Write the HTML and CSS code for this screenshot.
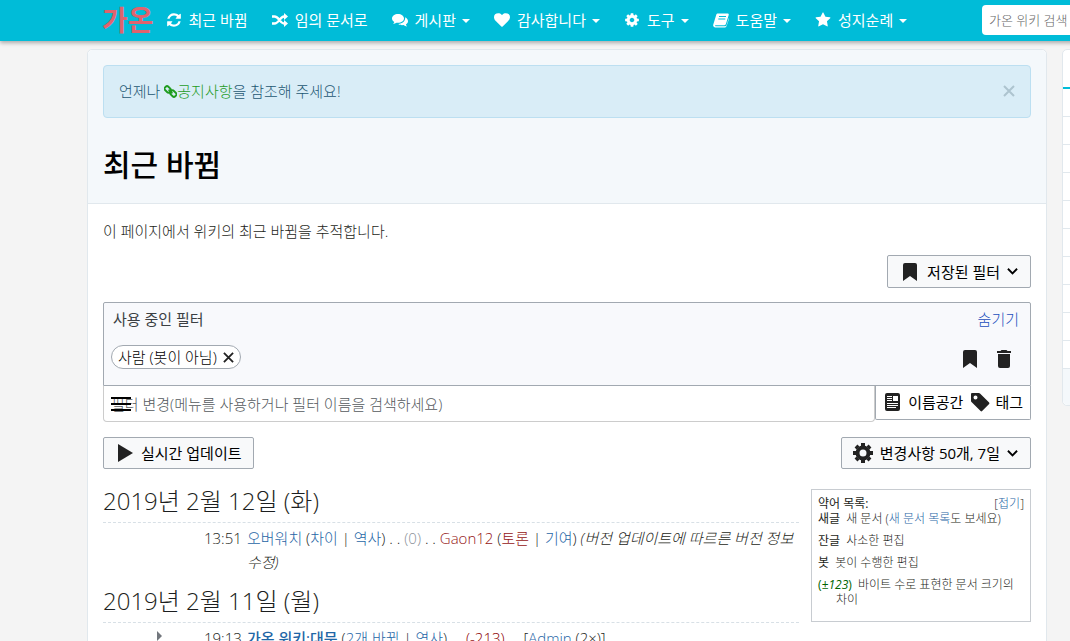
FILE: index.html
```html
<!DOCTYPE html>
<html lang="ko">
  <head>
    <meta charset="UTF-8" />
    <meta name="viewport" content="width=device-width, initial-scale=1.0" />
    <title>최근 바뀜 - 가온 위키</title>
    <link rel="stylesheet" href="styles.css">
  </head>
  <body>
    <nav class="navbar">
      <a class="brand" href="#">가온</a>
      <a class="nav-item" href="#">
        <svg class="nav-icon" viewBox="0 0 1792 1792"><path d="M1639 1056q0 5-1 7-64 268-268 434.500t-478 166.500q-146 0-282.500-55t-243.500-157l-129 129q-19 19-45 19t-45-19-19-45v-448q0-26 19-45t45-19h448q26 0 45 19t19 45-19 45l-137 137q71 66 161 102t187 36q134 0 250-65t186-179q11-17 53-117 8-23 30-23h192q13 0 22.500 9.500t9.500 22.500zm25-800v448q0 26-19 45t-45 19h-448q-26 0-45-19t-19-45 19-45l138-138q-148-137-349-137-134 0-250 65t-186 179q-11 17-53 117-8 23-30 23h-199q-13 0-22.500-9.500t-9.500-22.500v-7q65-268 270-434.500t480-166.500q146 0 284 55.500t245 156.500l130-129q19-19 45-19t45 19 19 45z"/></svg>
        <span>최근 바뀜</span>
      </a>
      <a class="nav-item" href="#">
        <svg class="nav-icon" viewBox="0 0 16 16"><path d="M0 4.500h2.500c4.500 0 5.500 7 9.500 7h1M0 11.500h2.500c4.500 0 5.500-7 9.500-7h1" fill="none" stroke="currentColor" stroke-width="2.400"/><path d="M12 1l4 3.500L12 8zM12 8l4 3.500-4 3.500z"/></svg>
        <span>임의 문서로</span>
      </a>
      <a class="nav-item" href="#">
        <svg class="nav-icon" viewBox="0 0 16 16"><path d="M6 2C2.700 2 0 4 0 6.500 0 8 .9 9.200 2.300 10c-.2.800-.7 1.400-1.200 2 1.300-.1 2.500-.6 3.400-1.300.5.100 1 .1 1.500.1 3.300 0 6-1.900 6-4.300S9.300 2 6 2z"/><path d="M13.200 5.300c.4 3.800-2.800 6.500-7 6.700 1.300 1 3.300 1.400 5.300 1.100 1 .8 2.200 1.300 3.600 1.400-.6-.6-1-1.200-1.200-2 1.300-.8 2.100-1.900 2.100-3.200 0-1.700-1.100-3.200-2.800-4z"/></svg>
        <span>게시판</span><span class="caret"></span>
      </a>
      <a class="nav-item" href="#">
        <svg class="nav-icon" viewBox="0 0 1792 1792"><path d="M896 1664q-26 0-44-18l-624-602q-10-8-27.500-26t-55.500-65.500-68-97.500-53.500-121-23.500-138q0-220 127-344t351-124q62 0 126.500 21.500t120 58 95.500 68.500 76 68q36-36 76-68t95.500-68.500 120-58 126.500-21.500q224 0 351 124t127 344q0 221-229 450l-623 600q-18 18-44 18z"/></svg>
        <span>감사합니다</span><span class="caret"></span>
      </a>
      <a class="nav-item" href="#">
        <svg class="nav-icon" viewBox="0 0 1792 1792"><path d="M1152 896q0-106-75-181t-181-75-181 75-75 181 75 181 181 75 181-75 75-181zm512-109v222q0 12-8 23t-20 13l-185 28q-19 54-39 91 35 50 107 138 10 12 10 25t-9 23q-27 37-99 108t-94 71q-12 0-26-9l-138-108q-44 23-91 38-16 136-29 186-7 28-36 28h-222q-14 0-24.500-8.500t-11.500-21.500l-28-184q-49-16-90-37l-141 107q-10 9-25 9-14 0-25-11-126-114-165-168-7-10-7-23 0-12 8-23 15-21 51-66.500t54-70.500q-27-50-41-99l-183-27q-13-2-21-12.500t-8-23.500v-222q0-12 8-23t19-13l186-28q14-46 39-92-40-57-107-138-10-12-10-24 0-10 9-23 26-36 98.500-107.500t94.500-71.500q13 0 26 10l138 107q44-23 91-38 16-136 29-186 7-28 36-28h222q14 0 24.500 8.500t11.500 21.500l28 184q49 16 90 37l142-107q9-9 24-9 13 0 25 10 129 119 165 170 7 8 7 22 0 12-8 23-15 21-51 66.500t-54 70.500q26 50 41 98l183 28q13 2 21 12.500t8 23.500z"/></svg>
        <span>도구</span><span class="caret"></span>
      </a>
      <a class="nav-item" href="#">
        <svg class="nav-icon" viewBox="0 0 16 16"><path d="M5 1.500h9.500c1 0 1.500.7 1.200 1.600l-2.800 9c-.2.700-.8 1.100-1.500 1.100H2.600c-.5 0-.8.500-.4.900.2.200.5.200.8.200h9.200c.6 0 1.100-.4 1.300-1L15.900 6c.2.300.2.700.1 1l-2.400 7c-.3.900-1.100 1.500-2 1.500H2.400C.9 15.500-.2 14 .2 12.700l3-9.800C3.500 2 4.100 1.500 5 1.500z"/><path d="M6 4.500h7M5.300 7h7" stroke="#00bcd8" stroke-width="1"/></svg>
        <span>도움말</span><span class="caret"></span>
      </a>
      <a class="nav-item" href="#">
        <svg class="nav-icon" viewBox="0 0 1792 1792"><path d="M1728 647q0 22-26 48l-363 354 86 500q1 7 1 20 0 21-10.500 35.500t-30.500 14.500q-19 0-40-12l-449-236-449 236q-22 12-40 12-21 0-31.500-14.500t-10.500-35.500q0-6 2-20l86-500-364-354q-25-27-25-48 0-37 56-46l502-73 225-455q19-41 49-41t49 41l225 455 502 73q56 9 56 46z"/></svg>
        <span>성지순례</span><span class="caret"></span>
      </a>
      <input class="search" type="text" placeholder="가온 위키 검색" aria-label="가온 위키 검색" />
    </nav>

    <div class="layout">
      <main class="content">
        <header class="content-header">
          <div class="alert">
            <div>언제나 <a class="notice-link" href="#"><svg class="link-icon" viewBox="0 0 14 14"><g fill="none" stroke="currentColor" stroke-width="2"><rect x="1" y="2" width="7" height="5" rx="2" transform="rotate(45 4 4)"/><rect x="6" y="7" width="7" height="5" rx="2" transform="rotate(45 10 10)"/><path d="M5 5l4 4"/></g></svg>공지사항</a>을 참조해 주세요!</div>
            <button class="close" aria-label="닫기">
              <svg viewBox="0 0 12 12"><path d="M1 1l10 10M11 1L1 11"/></svg>
            </button>
          </div>
          <h1>최근 바뀜</h1>
        </header>

        <div class="content-body">
          <p class="intro">이 페이지에서 위키의 최근 바뀜을 추적합니다.</p>

          <div class="saved-row">
            <button class="btn saved-btn">
              <svg class="icon" viewBox="0 0 20 20"><path d="M5 1a2 2 0 0 0-2 2v16l7-5 7 5V3a2 2 0 0 0-2-2z"/></svg>
              <span>저장된 필터</span>
              <svg class="chevron" viewBox="0 0 12 12"><path d="M1 3l5 5 5-5"/></svg>
            </button>
          </div>

          <section class="filters">
            <div class="active-filters">
              <div class="filter-row">
                <span class="filter-title">사용 중인 필터</span>
                <a class="hide-link" href="#">숨기기</a>
              </div>
              <div class="filter-row">
                <span class="chip">사람 (봇이 아님)
                  <button class="chip-close" aria-label="필터 제거"><svg viewBox="0 0 12 12"><path d="M1 1l10 10M11 1L1 11"/></svg></button>
                </span>
                <span class="filter-actions">
                  <button class="icon-btn" aria-label="필터 저장"><svg class="icon" viewBox="0 0 20 20"><path d="M5 1a2 2 0 0 0-2 2v16l7-5 7 5V3a2 2 0 0 0-2-2z"/></svg></button>
                  <button class="icon-btn" aria-label="필터 지우기"><svg class="icon" viewBox="0 0 20 20"><path d="M17 2h-3.500l-1-1h-5l-1 1H3v2h14zM4 17a2 2 0 0 0 2 2h8a2 2 0 0 0 2-2V5H4z"/></svg></button>
                </span>
              </div>
            </div>
            <div class="filter-search">
              <div class="filter-field">
                <input class="filter-input" type="text" placeholder="필터 변경(메뉴를 사용하거나 필터 이름을 검색하세요)" aria-label="필터 변경" />
                <svg class="menu-icon" viewBox="0 0 20 20"><path d="M0 4h20M0 10h20M0 16h20"/></svg>
              </div>
              <div class="filter-views">
                <button class="view-btn">
                  <svg class="icon" viewBox="0 0 20 20"><path fill-rule="evenodd" d="M4 1a2 2 0 0 0-2 2v14a2 2 0 0 0 2 2h11a2 2 0 0 0 2-2V3a2 2 0 0 0-2-2zm0 3h5v1H4zm0 2h5v1H4zm0 2h5v1H4zm0 3h11v1H4zm0 2h11v1H4zm0 2h9v1H4zm6-11h5v5h-5z"/></svg>
                  <span>이름공간</span>
                </button>
                <button class="view-btn">
                  <svg class="icon" viewBox="0 0 20 20"><path fill-rule="evenodd" d="M19.100 10.600 10 1.500A1.700 1.700 0 0 0 8.900 1H2a1 1 0 0 0-1 1v6.900c0 .4.200.8.500 1.100l9.100 9.100c.4.400 1.100.4 1.500 0l7-7a1.100 1.100 0 0 0 0-1.500zM5.500 7.500a2 2 0 1 1 0-4 2 2 0 0 1 0 4z"/></svg>
                  <span>태그</span>
                </button>
              </div>
            </div>
          </section>

          <div class="update-row">
            <button class="btn live-btn">
              <svg class="icon" viewBox="0 0 20 20"><path d="M3 1l15 9-15 9z"/></svg>
              <span>실시간 업데이트</span>
            </button>
            <button class="btn limit-btn">
              <svg class="icon" viewBox="0 0 20 20"><g fill="none" stroke="currentColor"><circle cx="10" cy="10" r="5.500" stroke-width="4"/><path stroke-width="4" d="M10 0v3M10 17v3M0 10h3M17 10h3M3 3l2 2M15 15l2 2M3 17l2-2M15 5l2-2"/></g></svg>
              <span>변경사항 50개, 7일</span>
              <svg class="chevron" viewBox="0 0 12 12"><path d="M1 3l5 5 5-5"/></svg>
            </button>
          </div>

          <div class="changes">
            <div class="change-list">
              <h4>2019년 2월 12일 (화)</h4>
              <div class="change">
                <span class="arrow"></span>
                <span class="time">13:51</span>
                <div class="entry"><a href="#">오버워치</a> (<a href="#">차이</a> | <a href="#">역사</a>) . . <span class="zero">(0)</span> . . <a class="new" href="#">Gaon12</a> (<a class="new" href="#">토론</a> | <a href="#">기여</a>) <em>(버전 업데이트에 따르른 버전 정보 수정)</em></div>
              </div>
              <h4>2019년 2월 11일 (월)</h4>
              <div class="change">
                <span class="arrow has-more"></span>
                <span class="time">19:13</span>
                <div class="entry"><a class="page" href="#">가온 위키:대문</a> (<a href="#">2개 바뀜</a> | <a href="#">역사</a>) . . <span class="minus">(-213)</span> . . [<a href="#">Admin</a> (2×)]</div>
              </div>
            </div>

            <aside class="legend">
              <div class="legend-head"><b>약어 목록:</b><span>[<a href="#">접기</a>]</span></div>
              <p><b>새글</b> 새 문서 (<a href="#">새 문서 목록</a>도 보세요)</p>
              <p><b>잔글</b> 사소한 편집</p>
              <p><b>봇</b> 봇이 수행한 편집</p>
              <p><b class="plus">(<i>±123</i>)</b> 바이트 수로 표현한 문서 크기의 차이</p>
            </aside>
          </div>
        </div>
      </main>

      <aside class="sidebar">
        <div class="side-title"></div>
        <div class="side-row"></div>
        <div class="side-row"></div>
        <div class="side-row"></div>
        <div class="side-row"></div>
        <div class="side-row"></div>
        <div class="side-row"></div>
        <div class="side-row"></div>
        <div class="side-row"></div>
        <div class="side-row"></div>
        <div class="side-row"></div>
        <div class="side-more"></div>
      </aside>
    </div>
  </body>
</html>
```
FILE: styles.css
```css
* {
  box-sizing: border-box;
}

body {
  margin: 0;
  height: 100vh;
  overflow: hidden;
  background: #f4f4f4;
  color: #1c1e20;
  font-family: "Open Sans", "Noto Sans CJK KR", sans-serif;
  font-size: 15px;
  font-weight: 300;
  line-height: 24px;
}

a {
  color: #1f66a6;
  text-decoration: none;
}

button,
input {
  font: inherit;
  color: inherit;
}

button {
  display: flex;
  align-items: center;
  padding: 0;
  border: none;
  background: none;
  cursor: pointer;
}

svg {
  flex: none;
  fill: currentColor;
}

b {
  font-weight: 400;
}

/* navbar */
.navbar {
  position: relative;
  display: flex;
  align-items: center;
  height: 41px;
  padding: 0 0 2px 102px;
  margin-right: -172px;
  background: #00bcd8;
  box-shadow: 0 2px 4px rgba(0, 0, 0, 0.3);
}

.brand {
  margin-right: 12px;
  color: #e0636e;
  font-size: 28px;
  font-weight: 700;
  line-height: 38px;
}

.nav-item {
  display: flex;
  align-items: center;
  margin-right: 24px;
  color: #fff;
  font-weight: 400;
  white-space: nowrap;
}

.nav-icon {
  width: 16px;
  height: 16px;
  margin-right: 7px;
}

.caret {
  margin: 2px 0 0 6px;
  border: 4px solid transparent;
  border-top-color: #fff;
  border-bottom: none;
}

.search {
  width: 240px;
  height: 30px;
  margin-left: auto;
  margin-right: 20px;
  padding: 0 7px;
  border: none;
  border-radius: 4px;
  background: #fff;
  font-size: 13px;
}

.search::placeholder {
  color: #666;
}

/* page columns */
.layout {
  display: grid;
  grid-template-columns: minmax(0, 1fr) 270px;
  align-items: start;
  gap: 15px;
  margin: 8px -262px 0 87px;
}

.content {
  border: 1px solid #e1e8ed;
  border-radius: 5px;
  background: #fff;
}

.content-header {
  padding: 15px;
  border-bottom: 1px solid #e1e8ed;
  border-radius: 5px 5px 0 0;
  background: #f4f8fb;
}

.alert {
  display: flex;
  align-items: center;
  justify-content: space-between;
  height: 53px;
  padding: 0 15px 2px;
  border: 1px solid #bcdff1;
  border-radius: 4px;
  background: #d9edf7;
  color: #1d5773;
}

.notice-link {
  color: #1f9c1f;
}

.link-icon {
  width: 13px;
  height: 13px;
  vertical-align: -1px;
}

.close svg {
  width: 12px;
  height: 12px;
  stroke: #adc4cf;
  stroke-width: 2;
}

h1 {
  margin: 24px 0 0;
  color: #000;
  font-size: 30px;
  font-weight: 500;
  line-height: 46px;
}

.content-body {
  padding: 15px 15px 30px;
}

.intro {
  margin: 0 0 12px;
}

/* filters */
.btn {
  height: 33px;
  border: 1px solid #a2a9b1;
  border-radius: 2px;
  background: #f8f9fa;
  color: #000;
  font-weight: 400;
}

.icon {
  width: 20px;
  height: 20px;
  color: #222;
}

.chevron {
  width: 11px;
  height: 11px;
  fill: none;
  stroke: currentColor;
  stroke-width: 2;
}

.saved-row {
  display: flex;
  justify-content: flex-end;
}

.saved-btn {
  gap: 7px;
  padding: 0 12px;
}

.filters {
  margin: 14px 0 15px;
}

.active-filters {
  height: 84px;
  padding: 4px 7px 0;
  border: 1px solid #a2a9b1;
  border-radius: 2px 2px 0 0;
  background: #f8f9fc;
}

.filter-row {
  display: flex;
  align-items: center;
  justify-content: space-between;
}

.filter-title {
  margin-left: 2px;
  color: #3b3f43;
  font-weight: 400;
}

.hide-link {
  margin-right: 4px;
  color: #1b4fbd;
}

.chip {
  display: flex;
  align-items: center;
  gap: 6px;
  height: 24px;
  margin: 14px 0;
  padding: 0 6px;
  border: 1px solid #a2a9b1;
  border-radius: 12px;
  background: #fff;
  color: #000;
}

.chip-close svg {
  width: 11px;
  height: 11px;
  stroke: #222;
  stroke-width: 2;
}

.filter-actions {
  display: flex;
  gap: 14px;
  margin: 4px 9px 0 0;
}

.filter-search {
  display: flex;
  align-items: flex-start;
}

.filter-field {
  position: relative;
  flex: 1;
}

.filter-input {
  display: block;
  width: 100%;
  height: 36px;
  padding: 0 7px;
  border: 1px solid #ccc;
  border-top: none;
  border-radius: 0 0 4px 4px;
  background: #fff;
}

.filter-input::placeholder {
  color: #54595d;
}

/* hamburger lies over the start of the placeholder */
.menu-icon {
  position: absolute;
  top: 8px;
  left: 8px;
  width: 20px;
  height: 20px;
  stroke: #000;
  stroke-width: 2;
}

.filter-views {
  display: flex;
  gap: 7px;
  height: 34px;
  padding: 0 7px 2px;
  border: 1px solid #a2a9b1;
  border-top: none;
  border-radius: 0 0 2px 2px;
}

.view-btn {
  gap: 5px;
  color: #000;
  font-weight: 400;
}

.update-row {
  display: flex;
  justify-content: space-between;
}

.update-row .btn {
  height: 32px;
}

.live-btn {
  gap: 6px;
  padding: 0 11px;
}

.limit-btn {
  gap: 7px;
  padding: 0 12px 0 11px;
}

/* change list */
.changes {
  display: flex;
  align-items: flex-start;
  gap: 12px;
  margin-top: 16px;
}

.change-list {
  flex: 1;
  min-width: 0;
}

h4 {
  margin: 0 0 3px;
  padding-bottom: 5px;
  border-bottom: 1px dashed #d8e0e6;
  font-size: 24px;
  font-weight: 300;
  line-height: 32px;
}

.change {
  display: flex;
  margin-bottom: 11px;
}

.arrow {
  width: 101px;
}

.has-more::before {
  content: "";
  display: block;
  margin: 5px 0 0 54px;
  width: 0;
  border: 5px solid transparent;
  border-left-color: #72777d;
  border-right: none;
}

.time {
  width: 43px;
}

.entry {
  flex: 1;
}

.zero {
  color: #8b929a;
}

.new {
  color: #951414;
}

.minus {
  color: #8b0000;
}

.page {
  font-weight: 500;
}

.legend {
  width: 220px;
  height: 133px;
  margin-top: 4px;
  padding: 6px;
  border: 1px solid #c8ccd1;
  font-size: 12px;
  line-height: 15px;
}

.legend-head {
  display: flex;
  justify-content: space-between;
}

.legend p {
  margin: 0 0 7px;
  padding-left: 18px;
  text-indent: -18px;
}

.legend p b {
  margin-right: 3px;
}

.legend .plus {
  color: #006400;
}

/* right column */
.sidebar {
  border: 1px solid #e1e8ed;
  border-radius: 5px;
  background: #fff;
}

.side-title {
  height: 39px;
  border-bottom: 2px solid #00bcd8;
}

.side-row {
  height: 28px;
  border-bottom: 1px solid #e1e8ed;
}

.side-more {
  height: 36px;
  border-radius: 0 0 5px 5px;
  background: #f4f8fb;
}
```
